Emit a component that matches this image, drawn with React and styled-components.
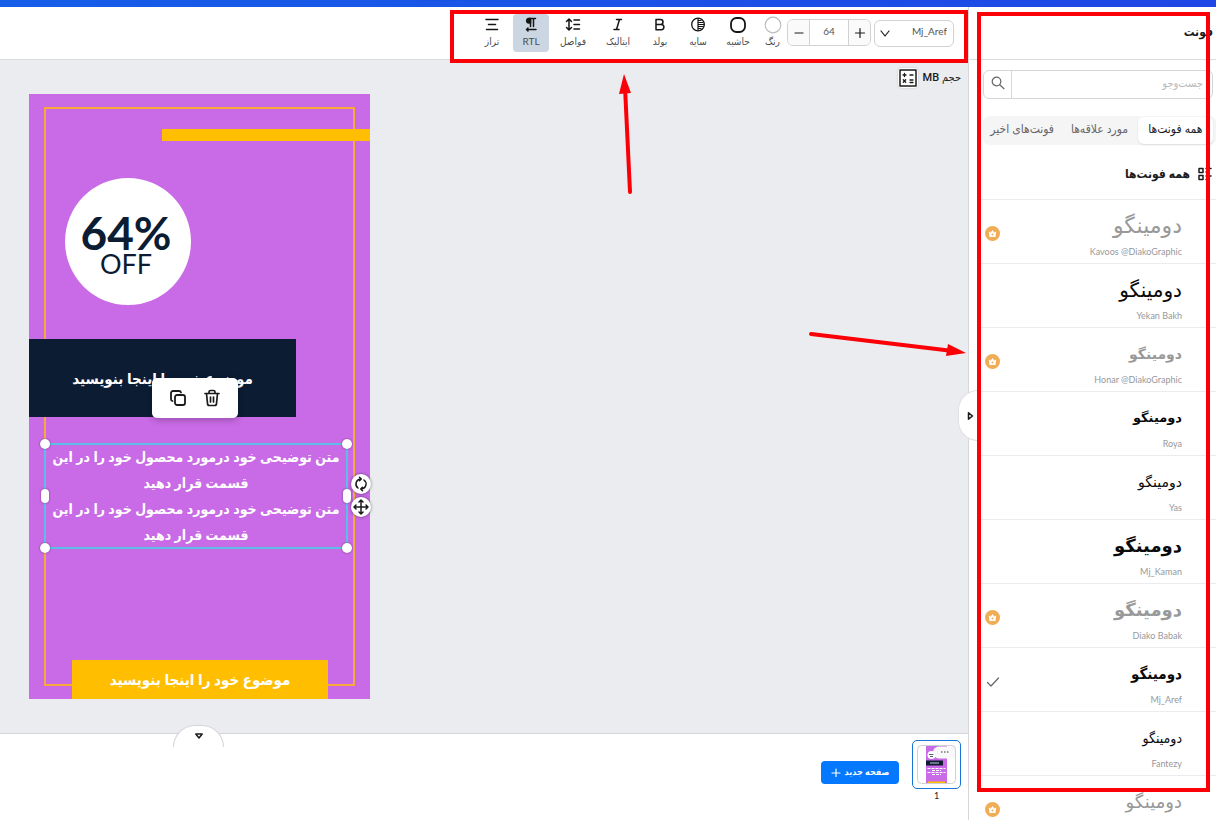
import React, { useState } from "react";
import styled, { createGlobalStyle } from "styled-components";

const fonts = `Lato, "DejaVu Sans Condensed", "DejaVu Sans", sans-serif`;

const GlobalStyle = createGlobalStyle`
  * { box-sizing: border-box; }
  body { margin: 0; background: #fff; font-family: ${fonts}; color: #1b1b1b; }
  button, input, select { font-family: inherit; color: inherit; margin: 0; }
  button { cursor: pointer; }
`;

const Page = styled.div`
  direction: rtl;
  height: 100vh;
  display: flex;
  flex-direction: column;
  overflow: hidden;
`;
const TopBar = styled.div`
  flex: none;
  height: 7px;
  background: linear-gradient(90deg, #155ee8, #1f46e6);
`;
const Shell = styled.div`
  flex: 1;
  min-height: 0;
  display: grid;
  grid-template-columns: 248px minmax(0, 1fr);
  grid-template-rows: minmax(0, 1fr);
`;

/* Font panel */
const Panel = styled.aside`
  position: relative;
  z-index: 1;
  border-left: 1px solid #d8d8dc;
  background: #fff;
  min-width: 0;
`;
const PanelHeader = styled.header`
  height: 53px;
  padding: 16px 3px;
  border-bottom: 1px solid #dcdcdf;
`;
const PanelTitle = styled.h1`
  margin: 0;
  font-size: 12px;
  line-height: 18px;
  font-weight: 700;
`;
const Search = styled.form`
  display: flex;
  height: 29px;
  margin: 10px 3px 17px 14px;
  border: 1px solid #d6d6d9;
  border-radius: 6px;
`;
const SearchInput = styled.input`
  flex: 1;
  min-width: 0;
  border: 0;
  background: none;
  padding: 0 9px 4px;
  font-size: 11px;
  outline: 0;
  &::placeholder { color: #b9b9bc; opacity: 1; }
`;
const SearchButton = styled.button`
  width: 28px;
  padding: 0 0 4px;
  border: 0;
  border-right: 1px solid #d6d6d9;
  background: none;
  display: grid;
  place-items: center;
`;
const Tabs = styled.div`
  display: flex;
  height: 29px;
  margin-left: 14px;
  padding: 1px 3px 1px 0;
  background: #f5f5f6;
  border-radius: 6px;
`;
const Tab = styled.button`
  flex: ${(p) => p.$grow} 0 0;
  min-width: 0;
  padding: 0 0 4px;
  border: 0;
  border-radius: 6px;
  white-space: nowrap;
  font-size: 12px;
  background: ${(p) => (p.$active ? "#fff" : "none")};
  color: ${(p) => (p.$active ? "#1b1b1b" : "#66666a")};
  box-shadow: ${(p) => (p.$active ? "0 1px 2px #0000001a" : "none")};
`;
const ListHeader = styled.div`
  display: flex;
  align-items: center;
  gap: 8px;
  height: 54px;
  padding: 4px 4px 0;
`;
const ListTitle = styled.h2`
  margin: 0;
  font-size: 12px;
  line-height: 18px;
  font-weight: 700;
`;
const FontList = styled.ul`
  list-style: none;
  margin: 0 0 0 12px;
  padding: 0;
`;
const FontRow = styled.li`
  height: 64px;
  border-top: 1px solid #ececee;
`;
const FontButton = styled.button`
  display: flex;
  width: 100%;
  height: 63px;
  align-items: center;
  justify-content: space-between;
  border: 0;
  background: none;
  padding: 4px 34px 0 4px;
`;
const FontTexts = styled.span`
  display: flex;
  flex-direction: column;
  align-items: flex-start;
`;
const Preview = styled.span`
  font-family: ${(p) => (p.$narrow ? `"DejaVu Sans Condensed"` : `"DejaVu Sans"`)}, sans-serif;
  font-size: ${(p) => p.$size}px;
  font-weight: ${(p) => p.$weight};
  line-height: 34px;
  height: 36px;
  color: ${(p) => (p.$locked ? "#999" : "#0a0a0a")};
`;
const FontName = styled.span`
  direction: ltr;
  font-size: 9px;
  line-height: 14px;
  height: 14px;
  color: #98989b;
`;
const Badge = styled.span`
  display: grid;
  place-items: center;
  width: 15px;
  height: 15px;
  border-radius: 50%;
  background: ${(p) => (p.$plain ? "none" : "#f0ad55")};
`;
const PanelHandle = styled.button`
  position: absolute;
  left: -11px;
  top: 383px;
  width: 20px;
  height: 51px;
  padding: 0 0 0 5px;
  border: 1px solid #e2e2e5;
  border-right: 0;
  border-radius: 25px 0 0 25px;
  background: #fff;
  display: grid;
  place-items: center;
`;

/* Editor */
const Editor = styled.main`
  display: flex;
  flex-direction: column;
  min-width: 0;
`;
const Toolbar = styled.div`
  position: relative;
  z-index: 2;
  flex: none;
  display: flex;
  align-items: flex-start;
  gap: 3px;
  height: 53px;
  padding: 7px 14px 0;
  border-bottom: 1px solid #d9dadd;
`;
const FontSelect = styled.label`
  position: relative;
  width: 80px;
  margin-top: 5px;
`;
const Select = styled.select`
  appearance: none;
  width: 100%;
  height: 27px;
  padding: 0 6px 4px 18px;
  border: 1px solid #d2d2d5;
  border-radius: 6px;
  background: none;
  font-size: 10px;
  color: #555;
`;
const Chevron = styled.span`
  position: absolute;
  left: 6px;
  top: 10px;
  display: flex;
  pointer-events: none;
`;
const Stepper = styled.div`
  direction: ltr;
  display: flex;
  width: 84px;
  height: 27px;
  margin-top: 5px;
  border: 1px solid #d2d2d5;
  border-radius: 6px;
  overflow: hidden;
`;
const StepButton = styled.button`
  width: 21px;
  padding: 0;
  border: 0;
  background: #fafafa;
  display: grid;
  place-items: center;
`;
const SizeInput = styled.input`
  flex: 1;
  min-width: 0;
  padding: 0 0 3px;
  border: 1px solid #d2d2d5;
  border-width: 0 1px;
  background: #fff;
  text-align: center;
  font-size: 10px;
  color: #555;
`;
const Tool = styled.button`
  width: ${(p) => p.$width}px;
  height: 38px;
  padding: 1px 0 0;
  border: 0;
  border-radius: 4px;
  background: ${(p) => (p.$active ? "#ccd6e2" : "none")};
  display: flex;
  flex-direction: column;
  align-items: center;
  font-size: 10px;
  line-height: 12px;
  white-space: nowrap;
  color: #4c4c50;
  svg { flex: none; color: #151515; }
`;

const Workspace = styled.section`
  position: relative;
  flex: 1;
  min-height: 0;
  direction: ltr;
  display: flex;
  align-items: flex-start;
  justify-content: space-between;
  padding: 34px 7px 0 29px;
  background: #eaecef;
`;
const Poster = styled.div`
  position: relative;
  flex: none;
  width: 341px;
  height: 605px;
  background: #c96ae6;
`;
const Shape = styled.div`
  position: absolute;
  left: ${(p) => p.$x}px;
  top: ${(p) => p.$y}px;
  width: ${(p) => p.$w}px;
  height: ${(p) => p.$h}px;
`;
const Frame = styled(Shape)`
  border: 2px solid #f9a93c;
`;
const Band = styled(Shape)`
  direction: rtl;
  display: grid;
  place-items: center;
  background: ${(p) => p.$color};
  color: #fff;
  font-size: 15px;
  font-weight: 700;
  white-space: nowrap;
`;
const Offer = styled(Shape)`
  border-radius: 50%;
  background: #fff;
  color: #0b1c33;
  display: flex;
  flex-direction: column;
  align-items: center;
  padding: 37px 4px 0 0;
`;
const Percent = styled.strong`
  font-size: 46px;
  line-height: 36px;
  font-weight: 700;
`;
const Off = styled.span`
  font-size: 27px;
  line-height: 26px;
`;
const Selection = styled(Shape)`
  direction: rtl;
  box-shadow: 0 0 0 1px #5bbde8, inset 0 0 0 1px #5bbde8;
  color: #fff;
  font-size: 14px;
  line-height: 26px;
  font-weight: 700;
  text-align: center;
  white-space: nowrap;
`;
const TextLine = styled.div`
  display: flex;
  justify-content: center;
`;
const Handle = styled.span`
  position: absolute;
  width: ${(p) => (p.$side ? 8 : 10)}px;
  height: ${(p) => (p.$side ? 14 : 10)}px;
  left: ${(p) => p.$left};
  top: ${(p) => p.$top};
  transform: translate(-50%, -50%);
  border-radius: 5px;
  background: #fff;
  box-shadow: 0 0 2px #00000080;
`;
const RoundButton = styled.button`
  position: absolute;
  left: 322px;
  top: ${(p) => p.$y}px;
  width: 20px;
  height: 20px;
  padding: 0;
  border: 0;
  border-radius: 50%;
  background: #fff;
  box-shadow: 0 0 3px #00000080;
  display: grid;
  place-items: center;
`;
const FloatingMenu = styled(Shape)`
  display: flex;
  align-items: center;
  justify-content: center;
  gap: 12px;
  border-radius: 5px;
  background: #fff;
  box-shadow: 0 2px 6px #00000040;
`;
const IconButton = styled.button`
  display: grid;
  place-items: center;
  width: 22px;
  height: 22px;
  padding: 0;
  border: 0;
  background: none;
`;
const Volume = styled.div`
  direction: rtl;
  display: flex;
  align-items: center;
  gap: 5px;
  margin-top: -26px;
  font-family: Roboto, "DejaVu Sans Condensed", "DejaVu Sans", sans-serif;
  font-size: 11px;
  line-height: 18px;
  font-weight: 500;
`;
const VolumeIcon = styled.span`
  display: flex;
  padding: 1px;
  border-radius: 4px;
  background: #fff;
  box-shadow: 0 0 2px #00000033;
`;

const PageStrip = styled.footer`
  position: relative;
  flex: none;
  display: flex;
  align-items: flex-start;
  gap: 13px;
  height: 87px;
  padding: 6px 7px 0;
  border-top: 1px solid #d4d5d9;
`;
const StripHandle = styled.button`
  position: absolute;
  left: 173px;
  top: -9px;
  width: 51px;
  height: 22px;
  padding: 0 0 2px;
  border: 1px solid #d4d5d9;
  border-bottom: 0;
  border-radius: 26px 26px 0 0;
  background: #fff;
  display: grid;
  place-items: center;
`;
const PageItem = styled.div`
  display: flex;
  flex-direction: column;
  align-items: center;
  font-size: 9px;
  line-height: 13px;
`;
const PageThumb = styled.button`
  width: 49px;
  height: 49px;
  padding: 4px;
  border: 1px solid #1676d8;
  border-radius: 5px;
  background: #fff;
  display: flex;
`;
const NewPage = styled.button`
  display: flex;
  align-items: center;
  justify-content: center;
  gap: 4px;
  width: 78px;
  height: 23px;
  margin-top: 21px;
  padding: 0 0 2px;
  border: 0;
  border-radius: 4px;
  background: #0478ff;
  color: #fff;
  font-size: 9px;
  font-weight: 700;
  white-space: nowrap;
`;

/* Red marks drawn over the screen */
const Outline = styled.div`
  position: absolute;
  z-index: 3;
  inset: ${(p) => p.$inset};
  border: 4px solid #fb0007;
  pointer-events: none;
`;
const ToolbarOutline = styled(Outline)`
  width: 518px;
`;
const Arrow = styled.svg`
  position: absolute;
  z-index: 3;
  right: ${(p) => p.$right}px;
  top: ${(p) => p.$top}px;
  pointer-events: none;
`;

const stroke = { fill: "none", stroke: "currentColor", strokeWidth: 1.5, strokeLinecap: "round", strokeLinejoin: "round" };
const Icon = ({ size = 20, children, box = 20, ...rest }) => (
  <svg width={size} height={size} viewBox={`0 0 ${box} ${box}`} {...stroke} aria-hidden="true" {...rest}>
    {children}
  </svg>
);

const tools = [
  { label: "رنگ", width: 23, icon: <circle cx="10" cy="10" r="7.8" stroke="#bdbdc0" strokeWidth="1.2" /> },
  { label: "حاشیه", width: 40, icon: <rect x="3" y="3" width="14" height="14" rx="5.5" strokeWidth="1.8" /> },
  {
    label: "سایه", width: 34,
    icon: <><circle cx="10" cy="9.500" r="6.300" strokeWidth="1.300" /><path d="M10 3.500v12M10 5.500h3M10 7.500h5M10 9.500h6M10 11.500h5M10 13.500h3" strokeWidth="1.200" /></>,
  },
  { label: "بولد", width: 36, icon: <path d="M6 4.500h4.500a2.500 2.500 0 0 1 0 5H6zM6 9.500h5.300a2.600 2.600 0 0 1 0 5.200H6z" /> },
  { label: "ایتالیک", width: 42, icon: <path d="M8.500 4.500h5M6 14.500h5M11.500 4.500l-3 10" /> },
  { label: "فواصل", width: 42, icon: <path d="M6 4.500v10M3.500 6.500L6 4l2.500 2.500M3.500 12.500L6 15l2.500-2.500M11 5h5.500M11 9.500h5.500M11 14h5.500" /> },
  {
    label: "RTL", width: 36, active: true,
    icon: <><path d="M9.500 3.500v8M12.500 3.500v8M14.500 3.500H8" /><path d="M9.500 3.500H8a2.300 2.300 0 0 0 0 4.600h1.500z" fill="currentColor" /><path d="M15 14.500H5.500M7 13l-1.500 1.500L7 16" /></>,
  },
  { label: "تراز", width: 36, icon: <path d="M4 4.500h12M6.500 9.500h7M4.500 14.500h11" /> },
];

const fontRows = [
  { name: "Kavoos @DiakoGraphic", size: 22, weight: 400, locked: true },
  { name: "Yekan Bakh", size: 20, weight: 400 },
  { name: "Honar @DiakoGraphic", size: 14, weight: 700, locked: true },
  { name: "Roya", size: 13, weight: 700 },
  { name: "Yas", size: 14, weight: 400 },
  { name: "Mj_Kaman", size: 18, weight: 700 },
  { name: "Diako Babak", size: 18, weight: 700, locked: true },
  { name: "Mj_Aref", size: 15, weight: 700, narrow: true, selected: true },
  { name: "Fantezy", size: 14, weight: 400, narrow: true },
  { name: "", size: 18, weight: 400, locked: true },
];

const Crown = () => (
  <Badge>
    <svg width="9" height="9" viewBox="0 0 9 9" aria-hidden="true">
      <path d="M.8 2.500l1.900 1L4.500 1l1.800 2.500 1.900-1-.7 5.500h-6z" fill="#fff" />
      <circle cx="4.500" cy="5.500" r="1" fill="#f0ad55" />
    </svg>
  </Badge>
);

const tabs = [
  { label: "همه فونت‌ها", grow: 75 },
  { label: "مورد علاقه‌ها", grow: 76 },
  { label: "فونت‌های اخیر", grow: 78 },
];

const paragraph = ["متن توضیحی خود درمورد محصول خود را در این", "قسمت قرار دهید"];

export default function App() {
  const [tab, setTab] = useState(0);
  const [size, setSize] = useState(64);
  return (
    <Page lang="fa">
      <GlobalStyle />
      <TopBar />
      <Shell>
        <Panel>
          <PanelHeader><PanelTitle>فونت</PanelTitle></PanelHeader>
          <Search onSubmit={(e) => e.preventDefault()}>
            <SearchInput placeholder="جست‌وجو" aria-label="جست‌وجو" />
            <SearchButton aria-label="جست‌وجو">
              <Icon size={14} box={14} stroke="#66666a" strokeWidth="1.2"><circle cx="5.5" cy="5.500" r="4.300" /><path d="M8.700 8.700l4.300 4" /></Icon>
            </SearchButton>
          </Search>
          <Tabs role="tablist">
            {tabs.map((t, i) => (
              <Tab key={t.label} role="tab" aria-selected={tab === i} $active={tab === i} $grow={t.grow} onClick={() => setTab(i)}>{t.label}</Tab>
            ))}
          </Tabs>
          <ListHeader>
            <Icon size={14} box={14}><path d="M1 1.500h4v4H1zM1 8.500h4v4H1zM8 1.500h5M8 5h3M8 9h5M8 12.500h3" /></Icon>
            <ListTitle>همه فونت‌ها</ListTitle>
          </ListHeader>
          <FontList>
            {fontRows.map((f) => (
              <FontRow key={f.name}>
                <FontButton>
                  <FontTexts>
                    <Preview $size={f.size} $weight={f.weight} $narrow={f.narrow} $locked={f.locked}>دومینگو</Preview>
                    <FontName>{f.name}</FontName>
                  </FontTexts>
                  {f.locked && <Crown />}
                  {f.selected && <Badge $plain><Icon size={14} box={14} stroke="#66666a" strokeWidth="1.2"><path d="M1.500 7.500l3.500 3.500 7.500-8" /></Icon></Badge>}
                </FontButton>
              </FontRow>
            ))}
          </FontList>
          <PanelHandle aria-label="بستن پنل"><Icon size={8} box={8}><path d="M1.500 0.800v6.400l4-3.200z" /></Icon></PanelHandle>
          <Outline $inset="5px 6px 28px 8px" />
        </Panel>

        <Editor>
          <Toolbar>
            <FontSelect>
              <Select aria-label="فونت"><option>Mj_Aref</option></Select>
              <Chevron><Icon size={10} box={10}><path d="M1 2l4 5 4-5" strokeWidth="1.200" /></Icon></Chevron>
            </FontSelect>
            <Stepper>
              <StepButton aria-label="کمتر" onClick={() => setSize(size - 1)}><Icon size={12} box={12} strokeWidth="1.2"><path d="M2 6h8" /></Icon></StepButton>
              <SizeInput aria-label="اندازه" value={size} onChange={(e) => setSize(Number(e.target.value) || 0)} />
              <StepButton aria-label="بیشتر" onClick={() => setSize(size + 1)}><Icon size={12} box={12} strokeWidth="1.2"><path d="M1.500 6h9M6 1.500v9" /></Icon></StepButton>
            </Stepper>
            {tools.map((t) => (
              <Tool key={t.label} $width={t.width} $active={t.active}><Icon>{t.icon}</Icon>{t.label}</Tool>
            ))}
            <ToolbarOutline $inset="3px 0 -4px auto" />
          </Toolbar>

          <Workspace>
            <Poster>
              <Frame $x={15} $y={13} $w={311} $h={579} />
              <Band $x={133} $y={35} $w={208} $h={12} $color="#ffbf00" />
              <Offer $x={36} $y={84} $w={126} $h={127}><Percent>64%</Percent><Off>OFF</Off></Offer>
              <Band $x={0} $y={245} $w={267} $h={78} $color="#0b1c33">موضوع خود را اینجا بنویسید</Band>
              <Band $x={43} $y={566} $w={256} $h={39} $color="#ffbf00">موضوع خود را اینجا بنویسید</Band>
              <Selection $x={16} $y={350} $w={302} $h={104}>
                {[...paragraph, ...paragraph].map((line, i) => <TextLine key={i}>{line}</TextLine>)}
                <Handle $left="0%" $top="0%" />
                <Handle $left="100%" $top="0%" />
                <Handle $left="0%" $top="100%" />
                <Handle $left="100%" $top="100%" />
                <Handle $side $left="0%" $top="50%" />
                <Handle $side $left="100%" $top="50%" />
              </Selection>
              <RoundButton $y={380} aria-label="چرخش"><Icon size={16} box={16}><path d="M5 12A5 5 0 0 1 7.500 3M11 4A5 5 0 0 1 8.500 13M6.500 1.300L8.300 3 6.500 4.800M9.500 11.200L7.700 13l1.800 1.700" /></Icon></RoundButton>
              <RoundButton $y={403} aria-label="جابجایی"><Icon size={18} box={18}><path d="M9 2v14M2 9h14M7 4l2-2 2 2M7 14l2 2 2-2M4 7L2 9l2 2M14 7l2 2-2 2" /></Icon></RoundButton>
              <FloatingMenu $x={123} $y={284} $w={86} $h={40}>
                <IconButton aria-label="کپی"><Icon size={18} box={18} strokeWidth="1.8"><rect x="6" y="6" width="10" height="10" rx="2" /><path d="M3.500 12A2 2 0 0 1 2 10V4a2 2 0 0 1 2-2h6a2 2 0 0 1 2 1.500" /></Icon></IconButton>
                <IconButton aria-label="حذف"><Icon size={18} box={18} strokeWidth="1.700"><path d="M2 4.500h14M3.500 4.500l1 10a2 2 0 0 0 2 2h5a2 2 0 0 0 2-2l1-10M6 4.500V3a1.500 1.500 0 0 1 1.500-1.500h3A1.500 1.500 0 0 1 12 3v1.500M7.500 8v5M10.500 8v5" /></Icon></IconButton>
              </FloatingMenu>
            </Poster>
            <Volume>
              <span>حجم MB</span>
              <VolumeIcon><Icon size={18} box={18}><rect x="1" y="1" width="16" height="16" /><path d="M4 6h3M5.500 4.500v3M11 6h3M4.300 10.800l2.400 2.400M6.700 10.800l-2.400 2.400M11 11h3M11 13.500h3" strokeWidth="1.300" /></Icon></VolumeIcon>
            </Volume>
            <Arrow $right={335} $top={13} width="16" height="122" viewBox="0 0 16 122">
              <path d="M8 14l5 105" stroke="#fb0007" strokeWidth="4" strokeLinecap="round" />
              <path d="M7 1L2 21l12-1z" fill="#fb0007" />
            </Arrow>
            <Arrow $right={1} $top={270} width="160" height="30" viewBox="0 0 160 30">
              <path d="M4 4l142 17" stroke="#fb0007" strokeWidth="4" strokeLinecap="round" />
              <path d="M159 23l-20 3 2-12z" fill="#fb0007" />
            </Arrow>
          </Workspace>

          <PageStrip>
            <PageItem>
              <PageThumb aria-label="صفحه 1">
                <svg width="39" height="39" viewBox="0 0 39 39">
                  <path d="M9 0h21v39H9z" fill="#c96ae6" />
                  <circle cx="14.500" cy="10" r="4" fill="#fff" />
                  <path d="M12 9.500h5M13 11.500h3" stroke="#0b1c33" strokeWidth=".7" />
                  <path d="M9 15.500h17v5H9z" fill="#0b1c33" />
                  <path d="M13 18h9" stroke="#fff" strokeWidth=".8" />
                  <path d="M10.500 23.500h18M15 25.500h9M10.500 27.500h18M15 29.500h9" stroke="#fff" strokeDasharray="3 1" />
                  <path d="M11 36.500h17V39H11z" fill="#ffbf00" />
                  <path d="M22 1.500h17v12H22a6 6 0 0 1 0-12z" fill="#f8f8fa" />
                  <path d="M24 7h1.500M27 7h1.500M30 7h1.500" stroke="#333" strokeWidth="1.200" />
                  <rect x=".5" y=".5" width="38" height="38" rx="4" fill="none" stroke="#cfcfd4" />
                </svg>
              </PageThumb>
              1
            </PageItem>
            <NewPage>صفحه جدید<Icon size={10} box={10} strokeWidth="1.2"><path d="M1 6h8M5 2v8" /></Icon></NewPage>
            <StripHandle aria-label="بستن صفحه‌ها"><Icon size={8} box={8}><path d="M.8 2h6.400L4 6z" /></Icon></StripHandle>
          </PageStrip>
        </Editor>
      </Shell>
    </Page>
  );
}
